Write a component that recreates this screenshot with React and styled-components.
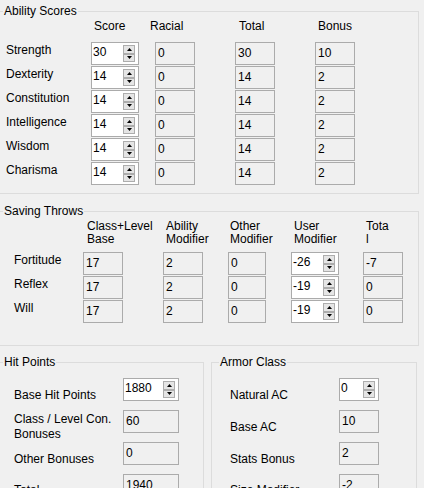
import React from 'react'
import styled, { createGlobalStyle } from 'styled-components'

const Global = createGlobalStyle`
  body {
    margin: 0;
    background: #f0f0f0;
    font-family: "Liberation Sans", Arial, sans-serif;
    font-size: 12px;
    color: #000;
    overflow: hidden;
  }
`

const Page = styled.div`
  width: 424px;
  height: 488px;
  overflow: hidden;
  display: flex;
  flex-direction: column;
`

const Group = styled.fieldset`
  box-sizing: border-box;
  margin: ${p => p.$mt || 0}px 0 0 ${p => (p.$ml === undefined ? -2 : p.$ml)}px;
  padding: 0;
  min-width: 0;
  width: ${p => p.$w}px;
  height: ${p => p.$h}px;
  border: 1px solid #dcdcdc;
  flex-shrink: 0;
`

const Legend = styled.legend`
  margin-left: ${p => p.$ml || 4}px;
  padding: 0 1px;
  line-height: 14px;
`

const Row = styled.div`
  display: flex;
  margin-top: 9px;
`

const Grid = styled.div`
  display: grid;
  grid-template-columns: ${p => p.$cols};
  grid-template-rows: ${p => p.$rows};
  padding: ${p => p.$pad};
  align-items: start;
  justify-items: start;
`

const Header = styled.div`
  margin-left: ${p => p.$shift || 0}px;
  line-height: ${p => p.$lh || 14}px;
  white-space: nowrap;
`

const Label = styled.div`
  margin-top: ${p => p.$dy || 0}px;
  line-height: ${p => p.$lh || 14}px;
  white-space: nowrap;
`

const Field = styled.div`
  box-sizing: border-box;
  width: ${p => p.$w || 40}px;
  height: 23px;
  border: 1px solid #ababab;
  background: #f0f0f0;
  padding: 3px 2px 0;
  line-height: 14px;
`

const SpinBox = styled.div`
  box-sizing: border-box;
  width: ${p => p.$w || 48}px;
  height: 23px;
  border: 1px solid #ababab;
  background: #fff;
  display: flex;
`

const SpinValue = styled.div`
  flex: 1;
  padding: 2px 0 0 1px;
  line-height: 14px;
`

const SpinButtons = styled.div`
  display: flex;
  flex-direction: column;
  width: 12px;
  margin: 2px 3px 2px 0;
`

const SpinButton = styled.div`
  box-sizing: border-box;
  flex: 1;
  border: 1px solid #adadad;
  background: #e5e5e5;
  display: flex;
  align-items: center;
  justify-content: center;
`

const Arrow = ({ down }) => (
  <svg width="5" height="3" viewBox="0 0 5 3">
    <polygon points={down ? '0,0 5,0 2.5,3' : '0,3 5,3 2.5,0'} fill="#000" />
  </svg>
)

const Spin = ({ value, w }) => (
  <SpinBox $w={w}>
    <SpinValue>{value}</SpinValue>
    <SpinButtons>
      <SpinButton><Arrow /></SpinButton>
      <SpinButton><Arrow down /></SpinButton>
    </SpinButtons>
  </SpinBox>
)

const abilities = [
  ['Strength', 30, 0, 30, 10],
  ['Dexterity', 14, 0, 14, 2],
  ['Constitution', 14, 0, 14, 2],
  ['Intelligence', 14, 0, 14, 2],
  ['Wisdom', 14, 0, 14, 2],
  ['Charisma', 14, 0, 14, 2],
]

const saves = [
  ['Fortitude', 17, 2, 0, -26, -7],
  ['Reflex', 17, 2, 0, -19, 0],
  ['Will', 17, 2, 0, -19, 0],
]

const hitPoints = [
  ['Base Hit Points', '1880', 10, true],
  [<>Class / Level Con.<br />Bonuses</>, '60', 2, false],
  ['Other Bonuses', '0', 10, false],
  ['Total', '1940', 9, false],
]

const armor = [
  ['Natural AC', '0', 10, true],
  ['Base AC', '10', 10, false],
  ['Stats Bonus', '2', 10, false],
  ['Size Modifier', '-2', 9, false],
]

export default function App() {
  return (
    <Page>
      <Global />
      <Group $w={421} $h={190} $mt={4}>
        <Legend>Ability Scores</Legend>
        <Grid $cols="85px 64px 80px 80px 40px" $rows="23px repeat(6, 24px)" $pad="1px 0 0 7px">
          <div />
          <Header $shift={3}>Score</Header>
          <Header $shift={-5}>Racial</Header>
          <Header $shift={4}>Total</Header>
          <Header $shift={3}>Bonus</Header>
          {abilities.map(([name, score, racial, total, bonus]) => (
            <React.Fragment key={name}>
              <Label $dy={1}>{name}</Label>
              <Spin value={score} />
              <Field>{racial}</Field>
              <Field>{total}</Field>
              <Field>{bonus}</Field>
            </React.Fragment>
          ))}
        </Grid>
      </Group>

      <Group $w={421} $h={142} $mt={10}>
        <Legend>Saving Throws</Legend>
        <Grid $cols="69px 80px 65px 63px 72px 40px" $rows="32px repeat(3, 24px)" $pad="2px 0 0 15px">
          <div />
          <Header $shift={4} $lh={13}>Class+Level<br />Base</Header>
          <Header $shift={3} $lh={13}>Ability<br />Modifier</Header>
          <Header $shift={2} $lh={13}>Other<br />Modifier</Header>
          <Header $shift={3} $lh={13}>User<br />Modifier</Header>
          <Header $shift={3} $lh={13}>Tota<br />l</Header>
          {saves.map(([name, base, ability, other, user, total]) => (
            <React.Fragment key={name}>
              <Label $dy={1}>{name}</Label>
              <Field>{base}</Field>
              <Field>{ability}</Field>
              <Field $w={38}>{other}</Field>
              <Spin value={user} />
              <Field>{total}</Field>
            </React.Fragment>
          ))}
        </Grid>
      </Group>

      <Row>
        <Group $w={206} $h={140}>
          <Legend>Hit Points</Legend>
          <Grid $cols="109px 56px" $rows="repeat(4, 32px)" $pad="9px 0 0 15px">
            {hitPoints.map(([name, value, dy, spin], i) => (
              <React.Fragment key={i}>
                <Label $dy={dy} $lh={15}>{name}</Label>
                {spin ? <Spin value={value} w={56} /> : <Field $w={56}>{value}</Field>}
              </React.Fragment>
            ))}
          </Grid>
        </Group>
        <Group $w={206} $h={140} $ml={7}>
          <Legend $ml={7}>Armor Class</Legend>
          <Grid $cols="109px 40px" $rows="repeat(4, 32px)" $pad="9px 0 0 18px">
            {armor.map(([name, value, dy, spin]) => (
              <React.Fragment key={name}>
                <Label $dy={dy}>{name}</Label>
                {spin ? <Spin value={value} w={40} /> : <Field>{value}</Field>}
              </React.Fragment>
            ))}
          </Grid>
        </Group>
      </Row>
    </Page>
  )
}
